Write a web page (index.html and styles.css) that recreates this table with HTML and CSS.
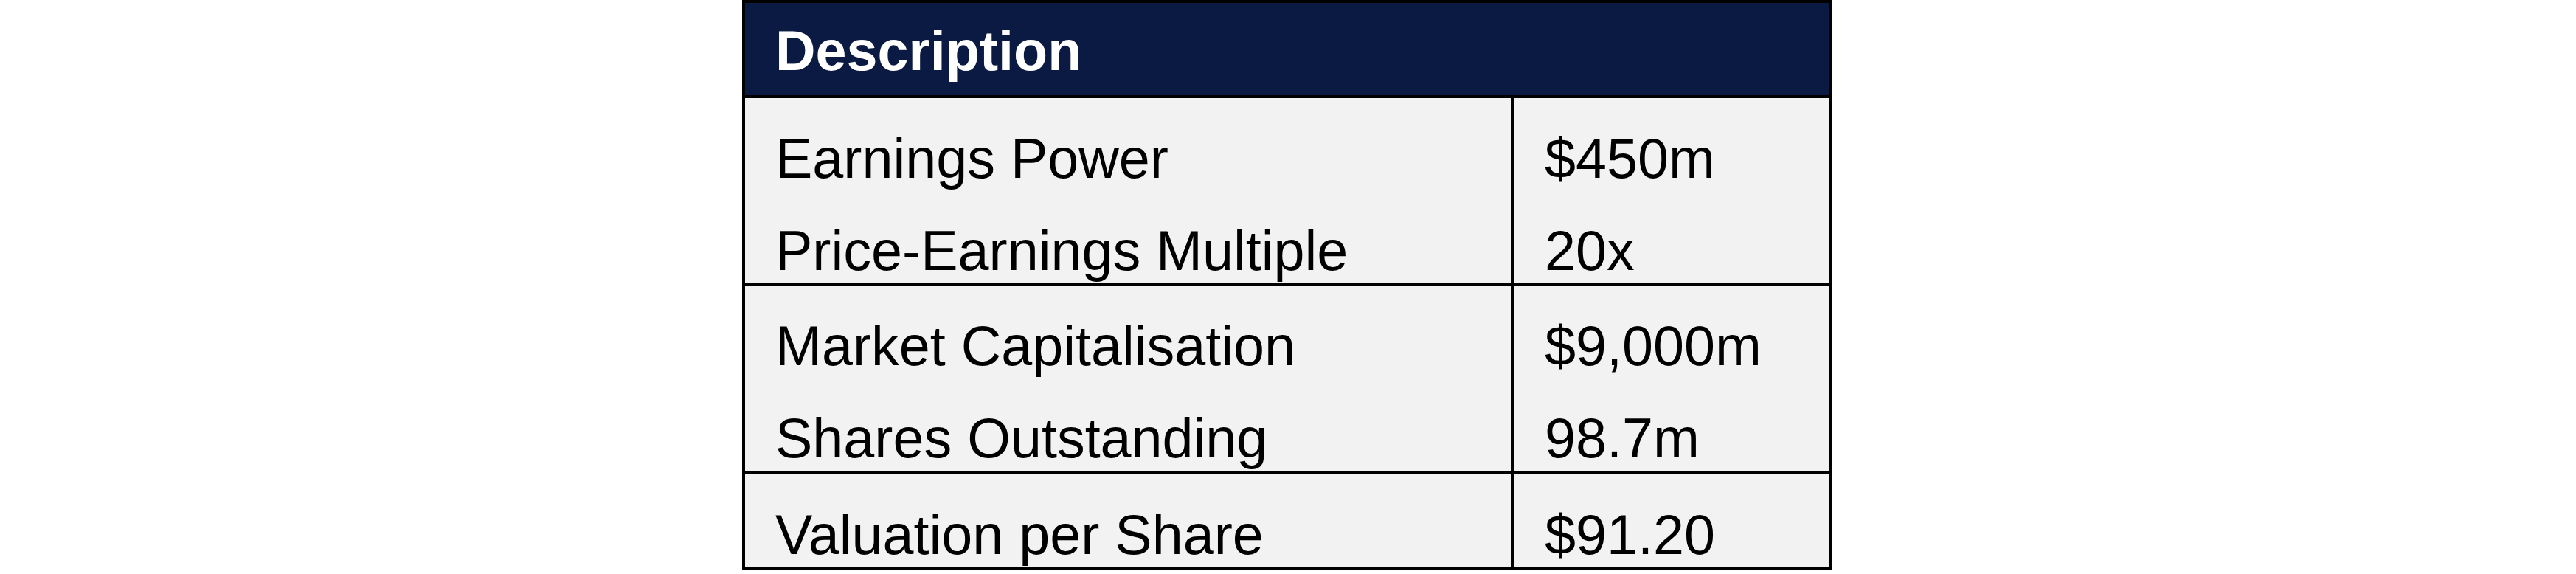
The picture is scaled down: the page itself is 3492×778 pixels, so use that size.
FILE: index.html
```html
<!DOCTYPE html>
<html>
<head>
<meta charset="utf-8">
<link rel="stylesheet" href="styles.css">
</head>
<body>
<div class="page">
  <div class="table">
    <div class="head">Description</div>
    <div class="group">
      <div class="cell label">
        <div class="line">Earnings Power</div>
        <div class="line">Price-Earnings Multiple</div>
      </div>
      <div class="cell value">
        <div class="line">$450m</div>
        <div class="line">20x</div>
      </div>
    </div>
    <div class="group tall">
      <div class="cell label">
        <div class="line">Market Capitalisation</div>
        <div class="line">Shares Outstanding</div>
      </div>
      <div class="cell value">
        <div class="line">$9,000m</div>
        <div class="line">98.7m</div>
      </div>
    </div>
    <div class="group last">
      <div class="cell label">
        <div class="line">Valuation per Share</div>
      </div>
      <div class="cell value">
        <div class="line">$91.20</div>
      </div>
    </div>
  </div>
</div>
</body>
</html>
```

FILE: styles.css
```css
html, body {
  margin: 0;
  padding: 0;
  background: #ffffff;
}

.page {
  display: flex;
  justify-content: center;
  padding-right: 2px;
}

.table {
  width: 1478px;
  box-sizing: border-box;
  border: 4px solid #000000;
  font-family: "Liberation Sans", Arial, sans-serif;
  font-size: 75.5px;
  color: #000000;
  background: #f2f2f2;
}

.head {
  height: 125px;
  box-sizing: border-box;
  padding: 22px 0 0 41px;
  line-height: 86px;
  background: #0a1a42;
  color: #ffffff;
  font-weight: bold;
  border-bottom: 4px solid #000000;
  box-sizing: content-box;
  height: 103px;
}

.group {
  display: grid;
  grid-template-columns: 1042px 428px;
  border-bottom: 4px solid #000000;
}

.group.tall .cell {
  padding-bottom: 2px;
}

.group.last {
  border-bottom: none;
}

.cell {
  display: flex;
  flex-direction: column;
  gap: 39px;
  padding: 39px 0 0 41px;
}

.cell.label {
  border-right: 4px solid #000000;
}

.cell.value {
  padding-left: 42px;
}

.line {
  line-height: 86px;
  height: 86px;
  white-space: nowrap;
}
```
